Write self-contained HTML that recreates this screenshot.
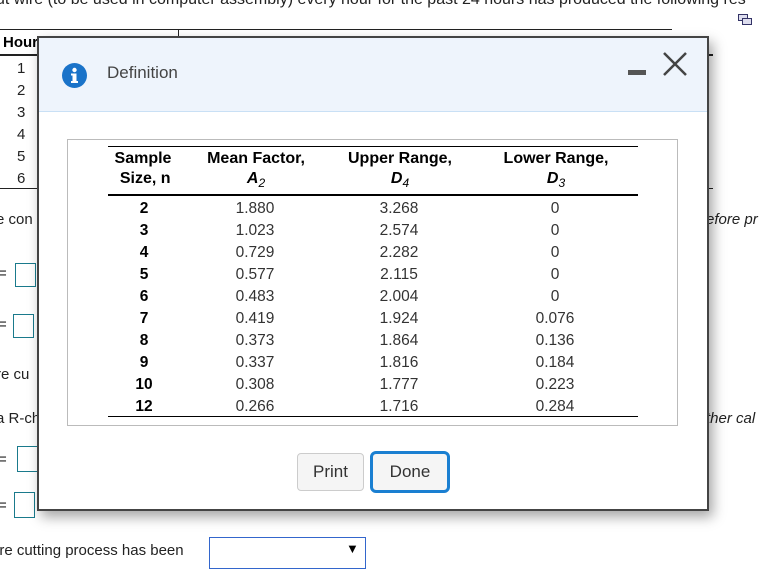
<!DOCTYPE html>
<html><head><style>
body{margin:0;width:763px;height:562px;overflow:hidden;background:#fff;font-family:"Liberation Sans",Arial,sans-serif;position:relative}
.a{position:absolute;white-space:nowrap}
.bg{font-size:15px;color:#222}
#dlg{position:absolute;left:37px;top:36px;width:668px;height:471px;border:2px solid #444;background:#fff;box-shadow:4px 6px 12px rgba(0,0,0,.35)}
#hd{position:absolute;left:0;top:0;width:668px;height:73px;background:#eef4fc;border-bottom:1px solid #c9e0f5}
#box{position:absolute;left:28px;top:101px;width:609px;height:285px;border:1px solid #bbb}
.t{position:absolute;font-size:15.5px;color:#333;text-align:center;width:100px}
.b{font-weight:bold;color:#000;font-size:16px}
.btn{position:absolute;height:36px;border-radius:4px;font-size:17px;color:#333;text-align:center;line-height:36px;background:#f5f5f5}
</style></head><body>
<div class="a bg" style="left:-4px;top:-9px;font-size:16px">ut wire (to be used in computer assembly) every hour for the past 24 hours has produced the following res</div>
<div class="a" style="left:0;top:29px;width:672px;border-top:1px solid #222"></div>
<div class="a" style="left:0;top:54px;width:40px;border-top:2px solid #222"></div>
<div class="a" style="left:705px;top:54px;width:8px;border-top:2px solid #222"></div>
<div class="a" style="left:178px;top:29px;height:10px;border-left:1px solid #222"></div>
<div class="a" style="left:3px;top:34px;font-weight:bold;font-size:15px">Hour</div>
<div class="a bg" style="left:17px;top:58px;line-height:22px">1<br>2<br>3<br>4<br>5<br>6</div>
<div class="a" style="left:0;top:188px;width:40px;border-top:1px solid #222"></div>
<div class="a" style="left:705px;top:188px;width:8px;border-top:1px solid #222"></div>
<div class="a bg" style="left:-4px;top:211px">e con</div>
<div class="a bg" style="left:706px;top:211px;font-style:italic">efore pr</div>
<div class="a bg" style="left:-2px;top:265px">=</div>
<div class="a" style="left:15px;top:263px;width:19px;height:22px;border:1px solid #1a7a8c"></div>
<div class="a bg" style="left:-2px;top:316px">=</div>
<div class="a" style="left:13px;top:314px;width:19px;height:22px;border:1px solid #1a7a8c"></div>
<div class="a bg" style="left:-4px;top:366px">re cu</div>
<div class="a bg" style="left:-4px;top:410px">a R-ch</div>
<div class="a bg" style="left:706px;top:410px;font-style:italic">ther cal</div>
<div class="a bg" style="left:-2px;top:451px">=</div>
<div class="a" style="left:17px;top:446px;width:19px;height:24px;border:1px solid #1a7a8c"></div>
<div class="a bg" style="left:-2px;top:497px">=</div>
<div class="a" style="left:14px;top:492px;width:19px;height:24px;border:1px solid #1a7a8c"></div>
<div class="a bg" style="left:-4px;top:542px">ire cutting process has been</div>
<div class="a" style="left:209px;top:537px;width:155px;height:30px;border:1px solid #3366cc"></div>
<div class="a" style="left:346px;top:541px;font-size:13px">▼</div>
<svg class="a" style="left:738px;top:14px" width="14" height="12"><rect x="0.5" y="0.5" width="9" height="6" fill="#dde" stroke="#336"/><rect x="4.5" y="4.5" width="9" height="6" fill="#dde" stroke="#336"/></svg>
<div id="dlg">
<div id="hd">
<svg class="a" style="left:23px;top:25px" width="25" height="25"><circle cx="12.5" cy="12.5" r="12.5" fill="#1a73c9"/><circle cx="12.5" cy="7" r="2.2" fill="#fff"/><rect x="10.5" y="10.5" width="4" height="9" fill="#fff"/><rect x="9" y="10.5" width="4" height="2" fill="#fff"/><rect x="9" y="18" width="7" height="2" fill="#fff"/></svg>
<div class="a" style="left:68px;top:25px;font-size:17px;color:#444">Definition</div>
<div class="a" style="left:589px;top:32px;width:18px;height:5px;background:#555"></div>
<svg class="a" style="left:623px;top:14px" width="26" height="24"><path d="M2 1L24 23M24 1L2 23" stroke="#444" stroke-width="2.5"/></svg>
</div>
<div id="box"></div>
<div class="a" style="left:69px;top:108px;width:530px;border-top:1px solid #000"></div>
<div class="a" style="left:69px;top:156px;width:530px;border-top:2px solid #000"></div>
<div class="a" style="left:69px;top:378px;width:530px;border-top:1px solid #000"></div>
<div class="t b" style="left:54px;top:111px;line-height:20px">Sample<br>&nbsp;Size, n</div>
<div class="t b" style="left:157px;top:111px;line-height:20px;width:120px">Mean Factor,<br><i>A<sub style="font-size:12px;font-weight:normal">2</sub></i></div>
<div class="t b" style="left:301px;top:111px;line-height:20px;width:120px">Upper Range,<br><i>D<sub style="font-size:12px;font-weight:normal">4</sub></i></div>
<div class="t b" style="left:457px;top:111px;line-height:20px;width:120px">Lower Range,<br><i>D<sub style="font-size:12px;font-weight:normal">3</sub></i></div>
<div class="t b" style="left:55px;top:160px;line-height:22px;font-size:15.5px">2<br>3<br>4<br>5<br>6<br>7<br>8<br>9<br>10<br>12</div>
<div class="t" style="left:166px;top:160px;line-height:22px">1.880<br>1.023<br>0.729<br>0.577<br>0.483<br>0.419<br>0.373<br>0.337<br>0.308<br>0.266</div>
<div class="t" style="left:310px;top:160px;line-height:22px">3.268<br>2.574<br>2.282<br>2.115<br>2.004<br>1.924<br>1.864<br>1.816<br>1.777<br>1.716</div>
<div class="t" style="left:466px;top:160px;line-height:22px">0<br>0<br>0<br>0<br>0<br>0.076<br>0.136<br>0.184<br>0.223<br>0.284</div>
<div class="btn" style="left:258px;top:415px;width:65px;border:1px solid #ccc">Print</div>
<div class="btn" style="left:331px;top:413px;width:74px;border:3px solid #1a7fd1;border-radius:6px">Done</div>
</div>
</body></html>
